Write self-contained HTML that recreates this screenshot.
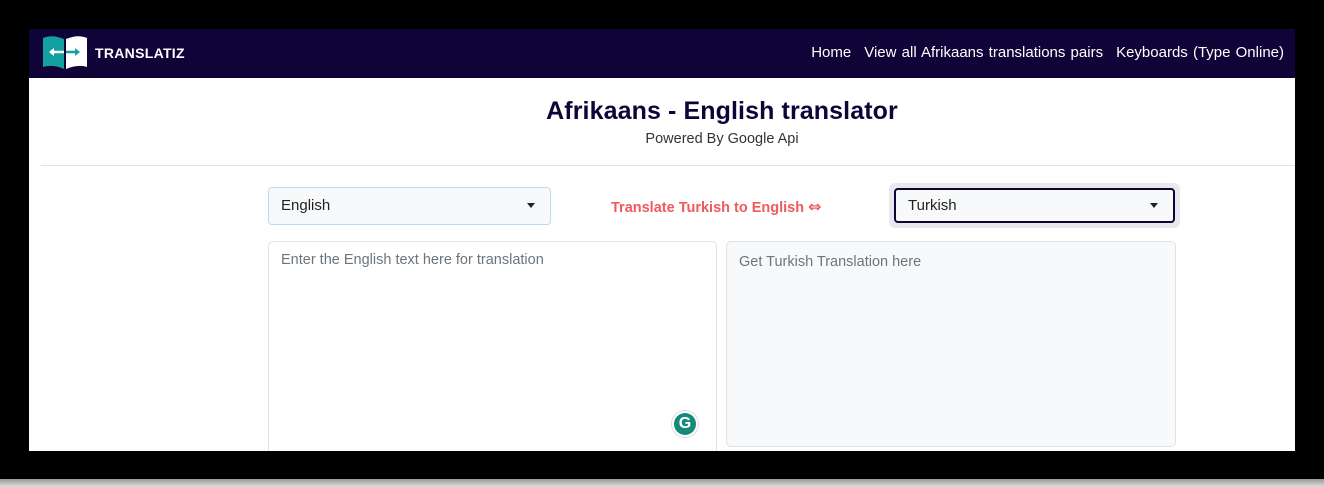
<!DOCTYPE html>
<html><head><style>
*{box-sizing:border-box;margin:0;padding:0}
body{width:1324px;height:487px;background:#000;position:relative;overflow:hidden;font-family:"Liberation Sans",sans-serif}
.bot{position:absolute;left:0;top:479px;width:1324px;height:8px;background:linear-gradient(#999,#ddd)}
.page{position:absolute;left:29px;top:29px;width:1266px;height:422px;background:#fff;overflow:hidden}
.nav{position:absolute;left:0;top:0;width:1266px;height:49px;background:#0f0338}
.brand{position:absolute;left:66px;top:16px;color:#fff;font-weight:bold;font-size:14px;letter-spacing:.3px}
.links{position:absolute;right:11px;top:15px;color:#fff;font-size:15px;word-spacing:1px}
.links span{margin-left:13px}
h1{position:absolute;left:60px;width:1266px;top:68px;text-align:center;font-size:25px;font-weight:bold;color:#0f0338;letter-spacing:.1px}
.sub{position:absolute;left:60px;width:1266px;top:102px;text-align:center;font-size:14.5px;color:#333}
.hr{position:absolute;left:12px;top:136px;width:1254px;height:1px;background:#e3e3e3}
.sel{position:absolute;border-radius:4px;background:#f8f9fa;font-size:15px;color:#222;padding-left:12px;line-height:35px}
.sel:after{content:"";position:absolute;right:15px;top:50%;margin-top:-3px;border:4px solid transparent;border-top:5px solid #222;border-bottom:0}
.mid{position:absolute;left:582px;top:168px;color:#f05a5a;font-weight:bold;font-size:14.5px}
.mid b{font-family:"DejaVu Sans",sans-serif;font-size:16px}
.ta{position:absolute;border:1px solid #dfe2e6;border-radius:5px;font-size:14.5px;color:#6c757d;padding:10px 12px}
</style></head><body>
<div class="page">
<div class="nav">
<svg style="position:absolute;left:11px;top:4px" width="50" height="38" viewBox="0 0 50 38">
<path d="M3 5 Q12 1 24 6 L24 36 Q13 31 3 34Z" fill="#12a0a0"/>
<path d="M26 6 Q38 1 47 5 L47 34 Q38 31 26 36Z" fill="#fff"/>
<path d="M10 19 H24" stroke="#fff" stroke-width="2.5"/>
<path d="M14 15 L9 19 L14 23Z" fill="#fff"/><path d="M35 15 L40 19 L35 23Z" fill="#12a0a0"/><path d="M26 19 H37" stroke="#12a0a0" stroke-width="2.5"/>
</svg>
<div class="brand">TRANSLATIZ</div>
<div class="links"><span>Home</span><span>View all Afrikaans translations pairs</span><span>Keyboards (Type Online)</span></div>
</div>
<h1>Afrikaans - English translator</h1>
<div class="sub">Powered By Google Api</div>
<div class="hr"></div>
<div class="sel" style="left:239px;top:158px;width:283px;height:38px;border:1px solid #b8dcee">English</div>
<div class="mid">Translate Turkish to English <b>⇔</b></div>
<div style="position:absolute;left:860px;top:154px;width:291px;height:45px;background:#e6e9ee;border-radius:6px"></div>
<div class="sel" style="left:865px;top:159px;width:281px;height:35px;border:2px solid #0f0338;line-height:31px">Turkish</div>
<div class="ta" style="left:239px;top:212px;width:449px;height:215px;background:#fff">Enter the English text here for translation</div>
<div style="position:absolute;left:642px;top:381px;width:28px;height:28px;border-radius:50%;background:#fff;border:1px solid #ddd"></div>
<div style="position:absolute;left:645px;top:384px;width:22px;height:22px;border-radius:50%;background:#158a7a;color:#fff;font-weight:bold;font-size:16px;text-align:center;line-height:22px">G</div>
<div class="ta" style="left:697px;top:212px;width:450px;height:206px;background:#f8f9fa;padding-top:12px">Get Turkish Translation here</div>
</div>
<div class="bot"></div>
</body></html>
